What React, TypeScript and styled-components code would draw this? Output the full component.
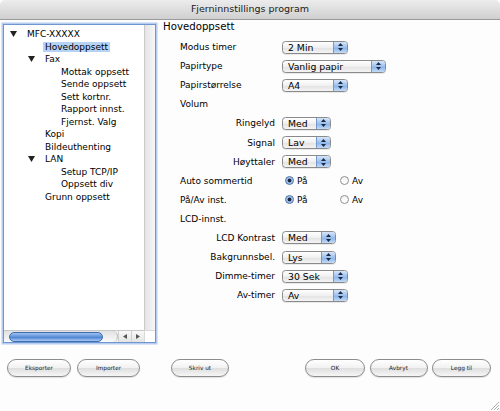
import styled, { createGlobalStyle } from "styled-components";

const GlobalStyle = createGlobalStyle`
  html, body {
    margin: 0;
    padding: 0;
    background: #ffffff;
  }
  body {
    font-family: "DejaVu Sans", "Liberation Sans", sans-serif;
    color: #000;
  }
`;

const Window = styled.div`
  position: relative;
  width: 500px;
  height: 411px;
  display: flex;
  flex-direction: column;
  background: #fdfdfd;
  overflow: hidden;
`;

const TitleBar = styled.div`
  flex: none;
  height: 20px;
  box-sizing: border-box;
  display: flex;
  align-items: center;
  justify-content: center;
  background: linear-gradient(#ececec, #d0d0d0);
  border-bottom: 1px solid #9a9a9a;
  border-radius: 5px 5px 0 0;
  font-size: 9.5px;
  color: #1a1a1a;
  padding-bottom: 2px;
`;

const Body = styled.div`
  flex: none;
  height: 323px;
  display: flex;
  padding-left: 3px;
`;

const TreePanel = styled.div`
  flex: none;
  width: 153px;
  height: 319px;
  margin-top: 4px;
  box-sizing: border-box;
  border: 1px solid #6f97cf;
  box-shadow: 0 0 0 1.5px #b6cdef;
  background: #fff;
  display: grid;
  grid-template-columns: 1fr 11px;
  grid-template-rows: 1fr 12px;
`;

const TreeList = styled.div`
  padding-top: 3px;
  overflow: hidden;
`;

const TreeRow = styled.div<{ $level: number }>`
  height: 12.5px;
  display: flex;
  align-items: center;
  padding-left: ${(p) => 6 + p.$level * 17}px;
  font-size: 9px;
  white-space: nowrap;
`;

const ToggleSlot = styled.span`
  flex: none;
  width: 17px;
  display: flex;
  align-items: center;
`;

const TreeLabel = styled.span<{ $selected?: boolean }>`
  line-height: 10px;
  padding: 0 2px;
  margin-left: -2px;
  background: ${(p) => (p.$selected ? "#b6d2f4" : "transparent")};
`;

const VScroll = styled.div`
  background: linear-gradient(90deg, #e4e4e4, #f7f7f7);
  border-left: 1px solid #cacaca;
`;

const HScroll = styled.div`
  display: flex;
  align-items: stretch;
  background: #f3f3f3;
  border-top: 1px solid #c8c8c8;
`;

const HTrack = styled.div`
  flex: 1;
  display: flex;
  align-items: center;
  padding-left: 5px;
  border-right: 1px solid #bdbdbd;
  border-radius: 0 6px 6px 0;
  background: linear-gradient(#e2e2e2, #fafafa);
`;

const HThumb = styled.div`
  width: 92px;
  height: 8px;
  border-radius: 5px;
  border: 1px solid #3f6db3;
  background: linear-gradient(#9fc2ef, #5b8fd9 50%, #4a80d0 51%, #a8caf2);
`;

const ArrowButton = styled.div`
  flex: none;
  width: 12px;
  display: flex;
  align-items: center;
  justify-content: center;
  border-left: 1px solid #d0d0d0;
  background: linear-gradient(#f8f8f8, #e4e4e4);
`;

const Corner = styled.div`
  background: #fff;
  border-top: 1px solid #d8d8d8;
  border-left: 1px solid #d8d8d8;
`;

const RightPane = styled.div`
  flex: 1;
  padding-left: 7px;
`;

const Heading = styled.div`
  height: 14px;
  line-height: 14px;
  margin-bottom: 3.5px;
  font-size: 10.2px;
`;

const FormRow = styled.div`
  height: 19.1px;
  display: flex;
  align-items: center;
`;

const FieldLabel = styled.span<{ $sub?: boolean }>`
  flex: none;
  width: 95px;
  margin-left: 17px;
  margin-right: 7px;
  font-size: 9px;
  white-space: nowrap;
  text-align: ${(p) => (p.$sub ? "right" : "left")};
`;

const Popup = styled.div<{ $w: number }>`
  flex: none;
  width: ${(p) => p.$w}px;
  height: 13px;
  box-sizing: border-box;
  display: flex;
  border: 1px solid #8a8a8a;
  border-radius: 3.5px;
  background: linear-gradient(#ffffff, #f0f0f0 50%, #e2e2e2 51%, #f4f4f4);
  box-shadow: 0 1px 0 rgba(0, 0, 0, 0.08);
  overflow: hidden;
`;

const PopupValue = styled.span`
  flex: 1;
  padding-left: 5px;
  font-size: 9.3px;
  line-height: 11px;
  white-space: nowrap;
`;

const PopupArrows = styled.span`
  flex: none;
  width: 13px;
  display: flex;
  align-items: center;
  justify-content: center;
  border-left: 1px solid #7399cc;
  background: linear-gradient(#d6e6fa, #9cc0ec 50%, #86b1e8 51%, #c3dbf8);
`;

const RadioGroup = styled.div`
  display: flex;
  margin-left: 3px;
`;

const RadioOption = styled.label`
  width: 55px;
  display: flex;
  align-items: center;
  gap: 3px;
  font-size: 9px;
`;

const RadioDot = styled.span<{ $on?: boolean }>`
  flex: none;
  width: 9px;
  height: 9px;
  box-sizing: border-box;
  border-radius: 50%;
  border: 1px solid ${(p) => (p.$on ? "#4d6f9e" : "#8f8f8f")};
  background: ${(p) =>
    p.$on
      ? "radial-gradient(circle, #1b2740 0 1.6px, #8fb6e8 2.2px, #c9ddf6 100%)"
      : "linear-gradient(#f2f2f2, #ffffff)"};
`;

const ButtonBar = styled.div`
  flex: none;
  display: flex;
  margin-top: 16px;
  padding: 0 9px 0 7px;
`;

const ButtonGroup = styled.div<{ $gap: number; $ml?: string }>`
  display: flex;
  gap: ${(p) => p.$gap}px;
  margin-left: ${(p) => p.$ml ?? "0"};
`;

const PillButton = styled.button<{ $w: number }>`
  width: ${(p) => p.$w}px;
  height: 18px;
  padding: 0;
  border: 1px solid #8c8c8c;
  border-radius: 9px;
  background: linear-gradient(#ffffff, #f1f1f1 50%, #dedede 51%, #f6f6f6);
  box-shadow: 0 1px 1px rgba(0, 0, 0, 0.12);
  font-family: "DejaVu Sans", sans-serif;
  font-size: 5.8px;
  color: #222;
`;

const Grip = styled.svg`
  position: absolute;
  right: 1px;
  bottom: 1px;
`;

function Triangle() {
  return (
    <svg width="7" height="6" viewBox="0 0 7 6">
      <polygon points="0,0 7,0 3.5,6" fill="#222" />
    </svg>
  );
}

function UpDown() {
  return (
    <svg width="5" height="8" viewBox="0 0 5 8">
      <polygon points="2.5,0 5,3 0,3" fill="#1c2a48" />
      <polygon points="0,5 5,5 2.5,8" fill="#1c2a48" />
    </svg>
  );
}

interface TreeItem {
  label: string;
  level: number;
  open?: boolean;
  selected?: boolean;
}

const tree: TreeItem[] = [
  { label: "MFC-XXXXX", level: 0, open: true },
  { label: "Hovedoppsett", level: 1, selected: true },
  { label: "Fax", level: 1, open: true },
  { label: "Mottak oppsett", level: 2 },
  { label: "Sende oppsett", level: 2 },
  { label: "Sett kortnr.", level: 2 },
  { label: "Rapport innst.", level: 2 },
  { label: "Fjernst. Valg", level: 2 },
  { label: "Kopi", level: 1 },
  { label: "Bildeuthenting", level: 1 },
  { label: "LAN", level: 1, open: true },
  { label: "Setup TCP/IP", level: 2 },
  { label: "Oppsett  div", level: 2 },
  { label: "Grunn oppsett", level: 1 },
];

type Field =
  | { kind: "popup"; label: string; sub?: boolean; value: string; w: number }
  | { kind: "radio"; label: string }
  | { kind: "group"; label: string };

const fields: Field[] = [
  { kind: "popup", label: "Modus timer", value: "2 Min", w: 66 },
  { kind: "popup", label: "Papirtype", value: "Vanlig papir", w: 104 },
  { kind: "popup", label: "Papirstørrelse", value: "A4", w: 66 },
  { kind: "group", label: "Volum" },
  { kind: "popup", label: "Ringelyd", sub: true, value: "Med", w: 49 },
  { kind: "popup", label: "Signal", sub: true, value: "Lav", w: 49 },
  { kind: "popup", label: "Høyttaler", sub: true, value: "Med", w: 49 },
  { kind: "radio", label: "Auto sommertid" },
  { kind: "radio", label: "På/Av inst." },
  { kind: "group", label: "LCD-innst." },
  { kind: "popup", label: "LCD Kontrast", sub: true, value: "Med", w: 54 },
  { kind: "popup", label: "Bakgrunnsbel.", sub: true, value: "Lys", w: 54 },
  { kind: "popup", label: "Dimme-timer", sub: true, value: "30 Sek", w: 66 },
  { kind: "popup", label: "Av-timer", sub: true, value: "Av", w: 66 },
];

function App() {
  return (
    <>
      <GlobalStyle />
      <Window>
        <TitleBar>Fjerninnstillings program</TitleBar>
        <Body>
          <TreePanel>
            <TreeList>
              {tree.map((item) => (
                <TreeRow key={item.label} $level={item.level}>
                  <ToggleSlot style={{ marginLeft: item.level === 1 ? 1 : 0 }}>
                    {item.open && <Triangle />}
                  </ToggleSlot>
                  <TreeLabel $selected={item.selected}>{item.label}</TreeLabel>
                </TreeRow>
              ))}
            </TreeList>
            <VScroll />
            <HScroll>
              <HTrack>
                <HThumb />
              </HTrack>
              <ArrowButton>
                <svg width="4" height="5" viewBox="0 0 4 5">
                  <polygon points="4,0 4,5 0,2.5" fill="#555" />
                </svg>
              </ArrowButton>
              <ArrowButton>
                <svg width="4" height="5" viewBox="0 0 4 5">
                  <polygon points="0,0 4,2.5 0,5" fill="#555" />
                </svg>
              </ArrowButton>
            </HScroll>
            <Corner />
          </TreePanel>
          <RightPane>
            <Heading>Hovedoppsett</Heading>
            {fields.map((f) => (
              <FormRow key={f.label}>
                <FieldLabel $sub={f.kind === "popup" && f.sub}>{f.label}</FieldLabel>
                {f.kind === "popup" && (
                  <Popup $w={f.w}>
                    <PopupValue>{f.value}</PopupValue>
                    <PopupArrows>
                      <UpDown />
                    </PopupArrows>
                  </Popup>
                )}
                {f.kind === "radio" && (
                  <RadioGroup>
                    <RadioOption>
                      <RadioDot $on />
                      På
                    </RadioOption>
                    <RadioOption>
                      <RadioDot />
                      Av
                    </RadioOption>
                  </RadioGroup>
                )}
              </FormRow>
            ))}
          </RightPane>
        </Body>
        <ButtonBar>
          <ButtonGroup $gap={6}>
            <PillButton $w={64}>Eksporter</PillButton>
            <PillButton $w={63}>Importer</PillButton>
          </ButtonGroup>
          <ButtonGroup $gap={0} $ml="31px">
            <PillButton $w={58}>Skriv ut</PillButton>
          </ButtonGroup>
          <ButtonGroup $gap={4.5} $ml="auto">
            <PillButton $w={60}>OK</PillButton>
            <PillButton $w={58}>Avbryt</PillButton>
            <PillButton $w={59}>Legg til</PillButton>
          </ButtonGroup>
        </ButtonBar>
        <Grip width="9" height="9" viewBox="0 0 9 9">
          <line x1="1" y1="9" x2="9" y2="1" stroke="#999" strokeWidth="0.8" />
          <line x1="4" y1="9" x2="9" y2="4" stroke="#999" strokeWidth="0.8" />
          <line x1="7" y1="9" x2="9" y2="7" stroke="#999" strokeWidth="0.8" />
        </Grip>
      </Window>
    </>
  );
}

export default App;
